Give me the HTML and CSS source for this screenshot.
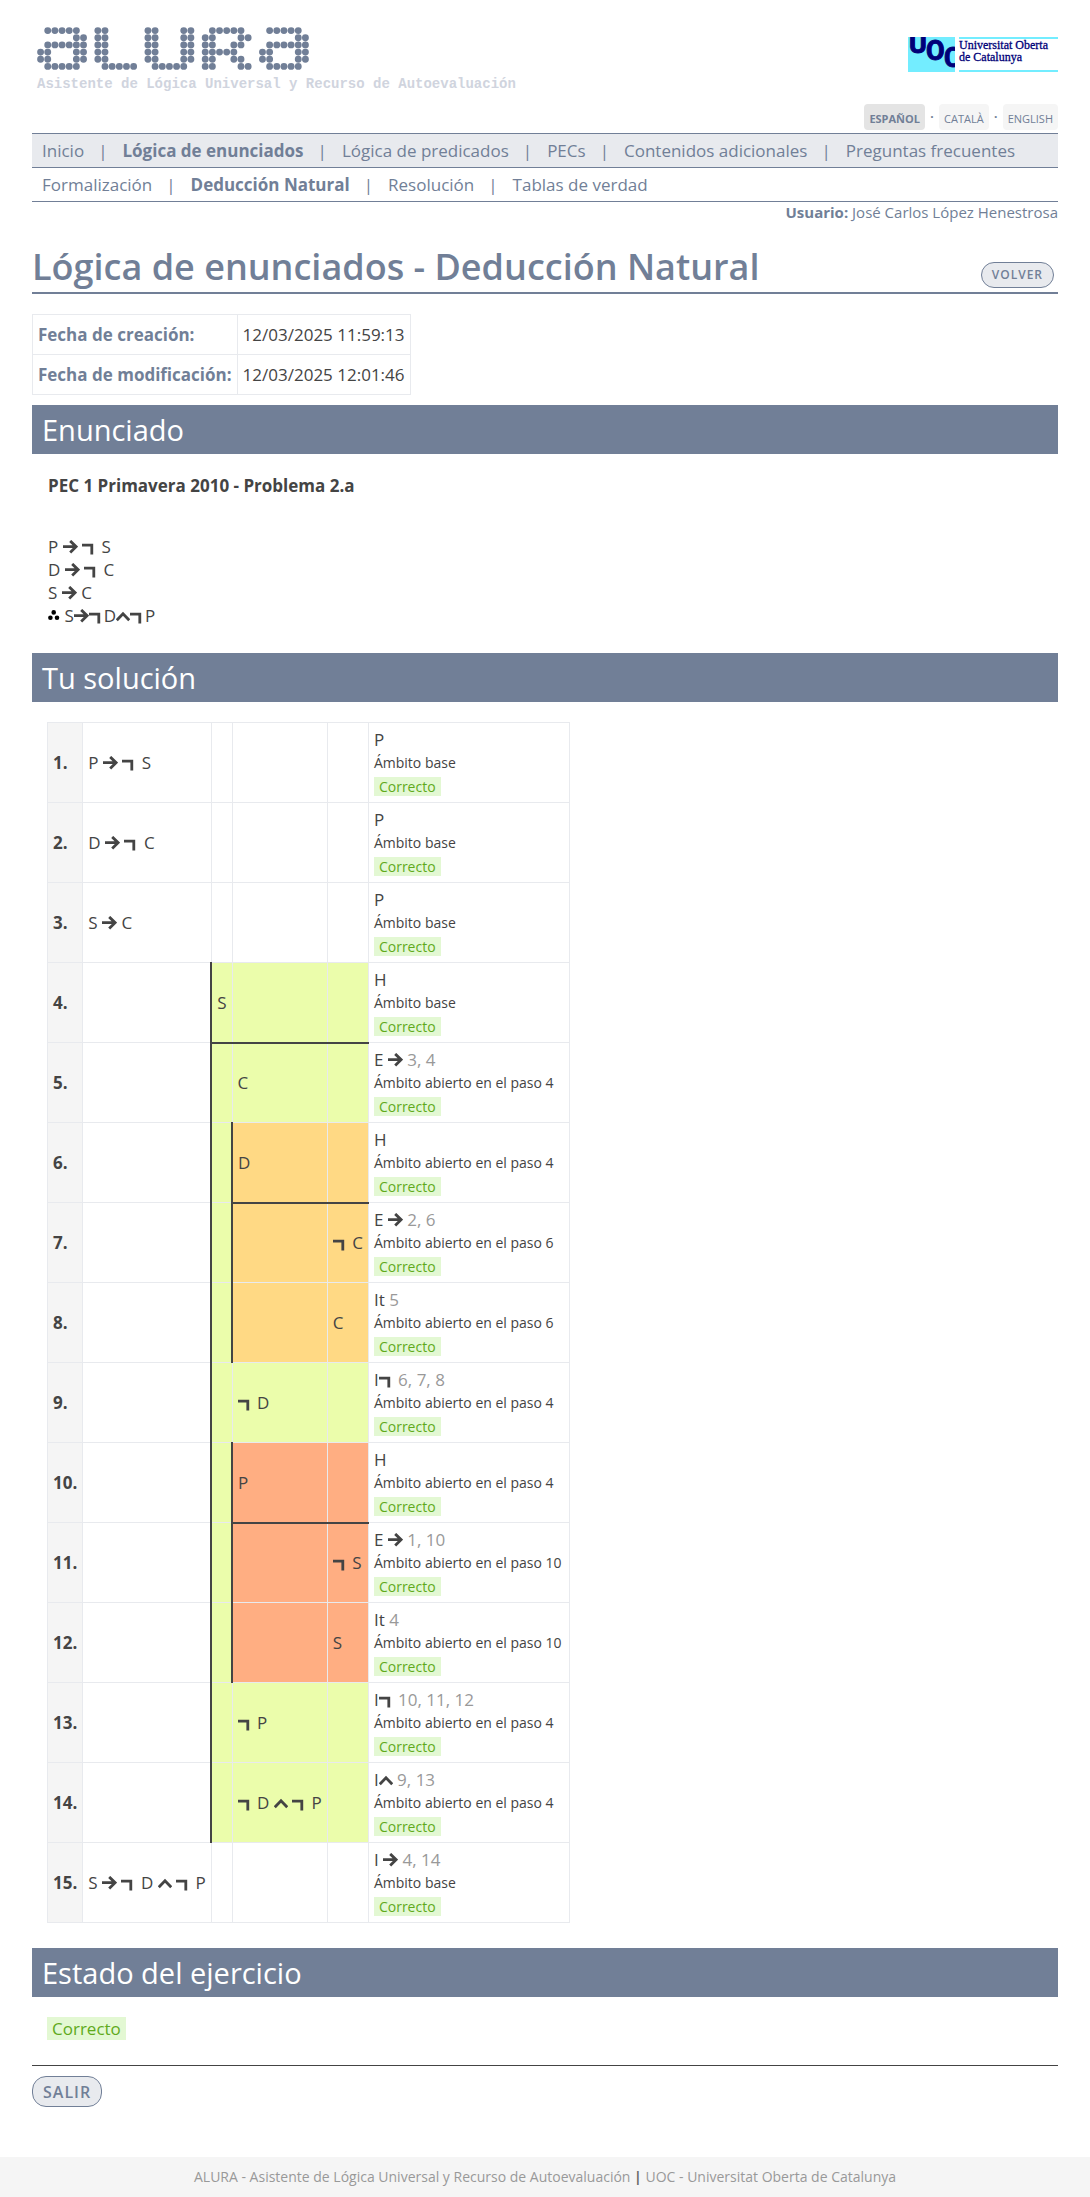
FILE: index.html
```html
<!DOCTYPE html>
<html lang="es">
<head>
<meta charset="utf-8">
<meta name="viewport" content="width=device-width, initial-scale=1">
<title>ALURA - Deducción Natural</title>
<link rel="stylesheet" href="styles.css">
</head>
<body>
<svg class="defs" width="0" height="0" aria-hidden="true">
  <symbol id="imp" viewBox="0 0 15 15"><path d="M0 6.7H13M7.2 .9L13.1 6.7L7.2 12.5" fill="none" stroke="currentColor" stroke-width="2.8"/></symbol>
  <symbol id="neg" viewBox="0 0 15 15"><path d="M0 5.1H9.8V14.4" fill="none" stroke="currentColor" stroke-width="2.8"/></symbol>
  <symbol id="and" viewBox="0 0 14 15"><path d="M.8 11.2L7 4.8L13.2 11.2" fill="none" stroke="currentColor" stroke-width="2.8"/></symbol>
  <symbol id="thus" viewBox="0 0 12 15"><path d="M5.7 3.4h0M2.4 8.8h0M9 8.8h0" fill="none" stroke="#000" stroke-width="4.6" stroke-linecap="round"/></symbol>
  <symbol id="dot-a" viewBox="0 0 7 6"><path d="M1.5 .5h0M2.5 .5h0M3.5 .5h0M4.5 .5h0M5.5 .5h0M5.5 1.5h0M6.5 1.5h0M1.5 2.5h0M2.5 2.5h0M3.5 2.5h0M4.5 2.5h0M5.5 2.5h0M6.5 2.5h0M.5 3.5h0M1.5 3.5h0M5.5 3.5h0M6.5 3.5h0M.5 4.5h0M1.5 4.5h0M5.5 4.5h0M6.5 4.5h0M1.5 5.5h0M2.5 5.5h0M3.5 5.5h0M4.5 5.5h0M5.5 5.5h0"/></symbol>
</svg>

<div class="page">
  <header class="masthead">
    <a class="brand" href="#" aria-label="ALURA">
      <svg class="brand-mark" viewBox="0 0 38 6" aria-hidden="true">
        <g fill="none" stroke="currentColor" stroke-width=".96" stroke-linecap="round">
          <use href="#dot-a" x="0" y="0" width="7" height="6"/>
          <path d="M8.5 .5h0M9.5 .5h0M8.5 1.5h0M9.5 1.5h0M8.5 2.5h0M9.5 2.5h0M8.5 3.5h0M9.5 3.5h0M8.5 4.5h0M9.5 4.5h0M9.5 5.5h0M10.5 5.5h0M11.5 5.5h0M12.5 5.5h0M13.5 5.5h0"/>
          <path d="M15.5 .5h0M16.5 .5h0M20.5 .5h0M21.5 .5h0M15.5 1.5h0M16.5 1.5h0M20.5 1.5h0M21.5 1.5h0M15.5 2.5h0M16.5 2.5h0M20.5 2.5h0M21.5 2.5h0M15.5 3.5h0M16.5 3.5h0M20.5 3.5h0M21.5 3.5h0M15.5 4.5h0M16.5 4.5h0M20.5 4.5h0M21.5 4.5h0M16.5 5.5h0M17.5 5.5h0M18.5 5.5h0M19.5 5.5h0M20.5 5.5h0"/>
          <path d="M24.5 .5h0M25.5 .5h0M26.5 .5h0M27.5 .5h0M28.5 .5h0M23.5 1.5h0M24.5 1.5h0M28.5 1.5h0M29.5 1.5h0M23.5 2.5h0M24.5 2.5h0M27.5 2.5h0M28.5 2.5h0M23.5 3.5h0M24.5 3.5h0M25.5 3.5h0M26.5 3.5h0M27.5 3.5h0M23.5 4.5h0M24.5 4.5h0M27.5 4.5h0M28.5 4.5h0M23.5 5.5h0M24.5 5.5h0M28.5 5.5h0M29.5 5.5h0"/>
          <use href="#dot-a" x="31" y="0" width="7" height="6"/>
        </g>
      </svg>
      <span class="brand-tag">Asistente de Lógica Universal y Recurso de Autoevaluación</span>
    </a>
    <a class="uoc" href="#">
      <svg class="uoc-mark" viewBox="0 0 47 35" role="img" aria-label="UOC">
        <rect width="47" height="35" fill="#73edff"/>
        <g class="uoc-letters"><text x="1" y="16">U</text><text x="18" y="23">O</text><text x="36" y="30">C</text></g>
      </svg>
      <span class="uoc-name">Universitat Oberta<br>de Catalunya</span>
    </a>
  </header>

  <nav class="langs" aria-label="Idioma">
    <a class="lang current" href="#">ESPAÑOL</a><span>·</span><a class="lang" href="#">CATALÀ</a><span>·</span><a class="lang" href="#">ENGLISH</a>
  </nav>

  <nav>
    <ul class="menu main">
      <li><a href="#">Inicio</a></li>
      <li><a class="on" href="#">Lógica de enunciados</a></li>
      <li><a href="#">Lógica de predicados</a></li>
      <li><a href="#">PECs</a></li>
      <li><a href="#">Contenidos adicionales</a></li>
      <li><a href="#">Preguntas frecuentes</a></li>
    </ul>
    <ul class="menu">
      <li><a href="#">Formalización</a></li>
      <li><a class="on" href="#">Deducción Natural</a></li>
      <li><a href="#">Resolución</a></li>
      <li><a href="#">Tablas de verdad</a></li>
    </ul>
  </nav>
  <p class="user"><b>Usuario:</b> José Carlos López Henestrosa</p>

  <main>
    <div class="title">
      <h1>Lógica de enunciados - Deducción Natural</h1>
      <button class="btn small" type="button">VOLVER</button>
    </div>

    <table class="dates">
      <tr><th scope="row">Fecha de creación:</th><td>12/03/2025 11:59:13</td></tr>
      <tr><th scope="row">Fecha de modificación:</th><td>12/03/2025 12:01:46</td></tr>
    </table>

    <h2>Enunciado</h2>
    <section class="statement">
      <h3>PEC 1 Primavera 2010 - Problema 2.a</h3>
      <p>P <svg class="op"><use href="#imp"/></svg> <svg class="op"><use href="#neg"/></svg> S</p>
      <p>D <svg class="op"><use href="#imp"/></svg> <svg class="op"><use href="#neg"/></svg> C</p>
      <p>S <svg class="op"><use href="#imp"/></svg> C</p>
      <p><svg class="op thus"><use href="#thus"/></svg> S<svg class="op"><use href="#imp"/></svg><svg class="op"><use href="#neg"/></svg>D<svg class="op and"><use href="#and"/></svg><svg class="op"><use href="#neg"/></svg>P</p>
    </section>

    <h2>Tu solución</h2>
    <table class="proof">
      <tr><th scope="row">1.</th><td>P <svg class="op"><use href="#imp"/></svg> <svg class="op"><use href="#neg"/></svg> S</td><td></td><td></td><td></td>
        <td>P<small>Ámbito base</small><span class="ok">Correcto</span></td></tr>
      <tr><th scope="row">2.</th><td>D <svg class="op"><use href="#imp"/></svg> <svg class="op"><use href="#neg"/></svg> C</td><td></td><td></td><td></td>
        <td>P<small>Ámbito base</small><span class="ok">Correcto</span></td></tr>
      <tr><th scope="row">3.</th><td>S <svg class="op"><use href="#imp"/></svg> C</td><td></td><td></td><td></td>
        <td>P<small>Ámbito base</small><span class="ok">Correcto</span></td></tr>
      <tr><th scope="row">4.</th><td></td><td class="s1 open hyp">S</td><td class="s1 hyp"></td><td class="s1 hyp"></td>
        <td>H<small>Ámbito base</small><span class="ok">Correcto</span></td></tr>
      <tr><th scope="row">5.</th><td></td><td class="s1 open"></td><td class="s1">C</td><td class="s1"></td>
        <td>E <svg class="op"><use href="#imp"/></svg> <i>3, 4</i><small>Ámbito abierto en el paso 4</small><span class="ok">Correcto</span></td></tr>
      <tr><th scope="row">6.</th><td></td><td class="s1 open"></td><td class="s2 open hyp">D</td><td class="s2 hyp"></td>
        <td>H<small>Ámbito abierto en el paso 4</small><span class="ok">Correcto</span></td></tr>
      <tr><th scope="row">7.</th><td></td><td class="s1 open"></td><td class="s2 open"></td><td class="s2"><svg class="op"><use href="#neg"/></svg> C</td>
        <td>E <svg class="op"><use href="#imp"/></svg> <i>2, 6</i><small>Ámbito abierto en el paso 6</small><span class="ok">Correcto</span></td></tr>
      <tr><th scope="row">8.</th><td></td><td class="s1 open"></td><td class="s2 open"></td><td class="s2">C</td>
        <td>It <i>5</i><small>Ámbito abierto en el paso 6</small><span class="ok">Correcto</span></td></tr>
      <tr><th scope="row">9.</th><td></td><td class="s1 open"></td><td class="s1"><svg class="op"><use href="#neg"/></svg> D</td><td class="s1"></td>
        <td>I<svg class="op"><use href="#neg"/></svg> <i>6, 7, 8</i><small>Ámbito abierto en el paso 4</small><span class="ok">Correcto</span></td></tr>
      <tr><th scope="row">10.</th><td></td><td class="s1 open"></td><td class="s3 open hyp">P</td><td class="s3 hyp"></td>
        <td>H<small>Ámbito abierto en el paso 4</small><span class="ok">Correcto</span></td></tr>
      <tr><th scope="row">11.</th><td></td><td class="s1 open"></td><td class="s3 open"></td><td class="s3"><svg class="op"><use href="#neg"/></svg> S</td>
        <td>E <svg class="op"><use href="#imp"/></svg> <i>1, 10</i><small>Ámbito abierto en el paso 10</small><span class="ok">Correcto</span></td></tr>
      <tr><th scope="row">12.</th><td></td><td class="s1 open"></td><td class="s3 open"></td><td class="s3">S</td>
        <td>It <i>4</i><small>Ámbito abierto en el paso 10</small><span class="ok">Correcto</span></td></tr>
      <tr><th scope="row">13.</th><td></td><td class="s1 open"></td><td class="s1"><svg class="op"><use href="#neg"/></svg> P</td><td class="s1"></td>
        <td>I<svg class="op"><use href="#neg"/></svg> <i>10, 11, 12</i><small>Ámbito abierto en el paso 4</small><span class="ok">Correcto</span></td></tr>
      <tr><th scope="row">14.</th><td></td><td class="s1 open"></td><td class="s1"><svg class="op"><use href="#neg"/></svg> D <svg class="op and"><use href="#and"/></svg> <svg class="op"><use href="#neg"/></svg> P</td><td class="s1"></td>
        <td>I<svg class="op and"><use href="#and"/></svg> <i>9, 13</i><small>Ámbito abierto en el paso 4</small><span class="ok">Correcto</span></td></tr>
      <tr><th scope="row">15.</th><td>S <svg class="op"><use href="#imp"/></svg> <svg class="op"><use href="#neg"/></svg> D <svg class="op and"><use href="#and"/></svg> <svg class="op"><use href="#neg"/></svg> P</td><td></td><td></td><td></td>
        <td>I <svg class="op"><use href="#imp"/></svg> <i>4, 14</i><small>Ámbito base</small><span class="ok">Correcto</span></td></tr>
    </table>

    <h2>Estado del ejercicio</h2>
    <p class="state"><span class="ok">Correcto</span></p>
    <div class="actions"><button class="btn" type="button">SALIR</button></div>
  </main>
</div>
<footer>ALURA - Asistente de Lógica Universal y Recurso de Autoevaluación <b>|</b> UOC - Universitat Oberta de Catalunya</footer>
</body>
</html>
```
FILE: styles.css
```css
* { box-sizing: border-box; }

body {
  margin: 0;
  font: 17px/23px "Open Sans", sans-serif;
  color: #444;
  background: #fff;
}

a { color: inherit; text-decoration: none; }
h1, h2, h3, p, ul { margin: 0; padding: 0; }
.defs { display: block; }

.page { padding: 27px 32px 0; }

/* Header */
.masthead {
  display: flex;
  justify-content: space-between;
  align-items: flex-start;
}
.brand { padding-left: 5px; color: #717f97; }
.brand-mark { display: block; width: 272px; height: 43px; }
.brand-tag {
  display: block;
  margin-top: 4px;
  font: bold 14px/20px "Liberation Mono", monospace;
  color: #d0d4de;
}
.uoc { display: flex; gap: 4px; margin-top: 10px; }
.uoc-mark { width: 47px; height: 35px; }
.uoc-letters {
  font: bold 27px "Roboto", sans-serif;
  fill: #000078;
  stroke: #000078;
  stroke-width: 1;
}
.uoc-name {
  width: 99px;
  border-top: 2px solid #73edff;
  border-bottom: 2px solid #73edff;
  font: 12px/12px "Liberation Serif", serif;
  color: #000078;
  -webkit-text-stroke: 0.3px #000078;
  white-space: nowrap;
}

.langs {
  display: flex;
  justify-content: flex-end;
  margin: 10px 0 3px;
  font-size: 12px;
  line-height: 18px;
  color: #717f97;
}
.langs span { width: 14px; text-align: center; font-weight: bold; line-height: 26px; }
.lang {
  padding: 6px 5px 2px;
  border-radius: 4px;
  background: #f5f5f5;
  font-size: 11px;
}
.lang.current { background: #e4e4e4; font-weight: bold; }

/* Menus */
.menu {
  display: flex;
  list-style: none;
  padding: 5px 10px;
  border-bottom: 1px solid #717f97;
  color: #717f97;
}
.menu.main { border-top: 1px solid #717f97; background: #e8eaee; }
.menu li + li::before { content: "|"; margin: 0 15px 0 14px; }
.on { font-weight: bold; }

.user {
  text-align: right;
  font-size: 15px;
  line-height: 21px;
  color: #717f97;
}

/* Title */
.title {
  display: flex;
  justify-content: space-between;
  align-items: flex-end;
  margin-top: 21px;
  padding: 0 4px 2px 0;
  border-bottom: 2px solid #717f97;
}
h1 { font-size: 36px; line-height: 46px; font-weight: 600; color: #717f97; }
.btn {
  height: 31px;
  padding: 0 10px;
  border: 1px solid #717f97;
  border-radius: 14px;
  background: #e8eaee;
  color: #717f97;
  font: 600 16px/20px "Open Sans", sans-serif;
  letter-spacing: 1px;
}
.btn.small { height: 26px; margin-bottom: 2px; font-size: 12px; border-radius: 13px; }

/* Tables */
table { border-collapse: collapse; }
th, td { border: 1px solid #e8eaee; padding: 5px; text-align: left; }
.dates { margin-top: 20px; }
.dates th, .dates td { padding: 8px 5px; }
.dates th { color: #717f97; }

h2 {
  margin-top: 10px;
  padding: 5px 10px;
  background: #717f97;
  color: #fff;
  font-size: 29px;
  line-height: 39px;
  font-weight: 400;
}

.statement { padding: 20px 16px 16px; }
.statement h3 { margin-bottom: 38px; font-size: 17px; line-height: 23px; }

.op { width: 15px; height: 15px; vertical-align: -2px; }
.op.and { width: 14px; }
.op.thus { width: 12px; }

.proof { margin: 20px 0 25px 15px; }
.proof th { background: #f5f5f5; }
.proof td { white-space: nowrap; }
.proof td:last-child { padding-right: 7px; }
.proof small { display: block; font-size: 14px; }
.proof i { font-style: normal; color: #999; }
.proof .s1 { background: #ebfdab; }
.proof .s2 { background: #ffd984; }
.proof .s3 { background: #ffae82; }
.proof .open { border-left: 2px solid #444; }
.proof .hyp { border-bottom: 2px solid #444; }

.ok {
  display: inline-block;
  padding: 0 5px;
  background: #e3f8d3;
  color: #60aa1c;
}
.proof .ok { font-size: 14px; line-height: 19px; }

.state { margin: 20px 0 25px 15px; }
.actions { border-top: 1px solid #444; padding-top: 10px; }

footer {
  margin-top: 50px;
  padding: 8px;
  background: #f5f5f5;
  color: #999;
  font-size: 14px;
  line-height: 24px;
  text-align: center;
}
footer b { color: #666; }
```
